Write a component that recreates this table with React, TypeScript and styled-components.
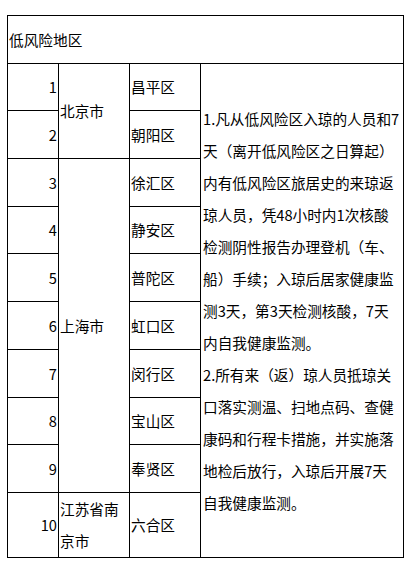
import styled, { createGlobalStyle } from 'styled-components';

const GlobalStyle = createGlobalStyle`
  html, body {
    margin: 0;
    padding: 0;
    background: #fff;
  }
  body {
    font-family: "Noto Sans CJK SC", "Microsoft YaHei", sans-serif;
    font-size: 14.67px;
    color: #000;
  }
`;

const areas = [
  { n: 1, district: '昌平区' },
  { n: 2, district: '朝阳区' },
  { n: 3, district: '徐汇区' },
  { n: 4, district: '静安区' },
  { n: 5, district: '普陀区' },
  { n: 6, district: '虹口区' },
  { n: 7, district: '闵行区' },
  { n: 8, district: '宝山区' },
  { n: 9, district: '奉贤区' },
  { n: 10, district: '六合区' },
];

const cities = [
  { name: '北京市', start: 2, span: 2 },
  { name: '上海市', start: 4, span: 7 },
  { name: '江苏省南京市', start: 11, span: 1 },
];

// line breaks follow the original sheet
const notes = [
  '1.凡从低风险区入琼的人员和7',
  '天（离开低风险区之日算起）',
  '内有低风险区旅居史的来琼返',
  '琼人员，凭48小时内1次核酸',
  '检测阴性报告办理登机（车、',
  '船）手续；入琼后居家健康监',
  '测3天，第3天检测核酸，7天',
  '内自我健康监测。',
  '2.所有来（返）琼人员抵琼关',
  '口落实测温、扫地点码、查健',
  '康码和行程卡措施，并实施落',
  '地检后放行，入琼后开展7天',
  '自我健康监测。',
];

const App = () => {
  return (
    <>
      <GlobalStyle />
      <Sheet>
        <Cell $col="1 / span 4" $row="1">低风险地区</Cell>
        {areas.map((a, i) => (
          <Cell key={'n' + a.n} $col="1" $row={`${i + 2}`} $right>
            {a.n}
          </Cell>
        ))}
        {cities.map((c) => (
          <Cell key={c.name} $col="2" $row={`${c.start} / span ${c.span}`}>
            <Wrap>{c.name}</Wrap>
          </Cell>
        ))}
        {areas.map((a, i) => (
          <Cell key={'d' + a.n} $col="3" $row={`${i + 2}`}>
            {a.district}
          </Cell>
        ))}
        <Cell $col="4" $row="2 / span 10">
          <Notes>
            {notes.map((line) => (
              <NoteLine key={line}>{line}</NoteLine>
            ))}
          </Notes>
        </Cell>
      </Sheet>
    </>
  );
};

const Sheet = styled.div`
  display: grid;
  grid-template-columns: 50px 70px 70px 202px;
  grid-template-rows: 47px 46px 47px 47px 46px 47px 47px 47px 46px 47px 64px;
  gap: 1px;
  width: max-content;
  margin: 15px 0 0 7px;
  background: #000;
  border: 1px solid #000;
`;

const Cell = styled.div<{ $col: string; $row: string; $right?: boolean }>`
  grid-column: ${(p) => p.$col};
  grid-row: ${(p) => p.$row};
  display: flex;
  align-items: center;
  justify-content: ${(p) => (p.$right ? 'flex-end' : 'flex-start')};
  padding: 0 1px;
  background: #fff;
  line-height: 32px;
  overflow: hidden;
`;

const Wrap = styled.div`
  line-height: 32px;
  word-break: break-all;
`;

const Notes = styled.div`
  display: flex;
  flex-direction: column;
  padding-left: 1px;
`;

const NoteLine = styled.span`
  line-height: 32px;
  white-space: nowrap;
`;

export default App;
